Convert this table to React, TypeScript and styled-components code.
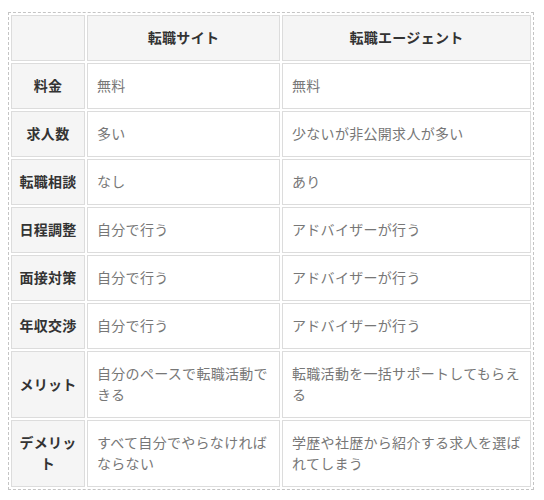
import React from 'react';
import styled, {createGlobalStyle} from 'styled-components';

const GlobalStyle = createGlobalStyle`
  body {
    margin: 8px;
    background: #fff;
    font-family: "Noto Sans CJK JP", "Noto Sans", sans-serif;
  }
`;

const Wrapper = styled.div`
  padding-top: 4px;
`;

const CompareTable = styled.table`
  width: 526px;
  table-layout: fixed;
  border-collapse: separate;
  border-spacing: 2px;
  border: 1px dashed #c4c4c4;
  font-size: 14px;
  line-height: 21px;
  letter-spacing: 0.3px;
`;

const HeadCell = styled.th`
  box-sizing: border-box;
  border: 1px solid #dcdcdc;
  background: #f5f5f5;
  padding: 11px 6px 12px;
  color: #333;
  font-weight: bold;
  text-align: center;
  vertical-align: middle;
`;

const BodyCell = styled.td`
  box-sizing: border-box;
  border: 1px solid #dcdcdc;
  background: #fff;
  padding: 11px 9px 12px;
  color: #777;
  font-weight: normal;
  text-align: left;
  vertical-align: middle;
`;

const rows: [string, string, string][] = [
  ['料金', '無料', '無料'],
  ['求人数', '多い', '少ないが非公開求人が多い'],
  ['転職相談', 'なし', 'あり'],
  ['日程調整', '自分で行う', 'アドバイザーが行う'],
  ['面接対策', '自分で行う', 'アドバイザーが行う'],
  ['年収交渉', '自分で行う', 'アドバイザーが行う'],
  ['メリット', '自分のペースで転職活動できる', '転職活動を一括サポートしてもらえる'],
  ['デメリット', 'すべて自分でやらなければならない', '学歴や社歴から紹介する求人を選ばれてしまう'],
];

export default function App() {
  return (
    <Wrapper>
      <GlobalStyle />
      <CompareTable>
        <colgroup>
          <col style={{width: 74}} />
          <col style={{width: 193}} />
          <col style={{width: 249}} />
        </colgroup>
        <thead>
          <tr>
            <HeadCell />
            <HeadCell>転職サイト</HeadCell>
            <HeadCell>転職エージェント</HeadCell>
          </tr>
        </thead>
        <tbody>
          {rows.map(([label, site, agent]) => (
            <tr key={label}>
              <HeadCell>{label}</HeadCell>
              <BodyCell>{site}</BodyCell>
              <BodyCell>{agent}</BodyCell>
            </tr>
          ))}
        </tbody>
      </CompareTable>
    </Wrapper>
  );
}
